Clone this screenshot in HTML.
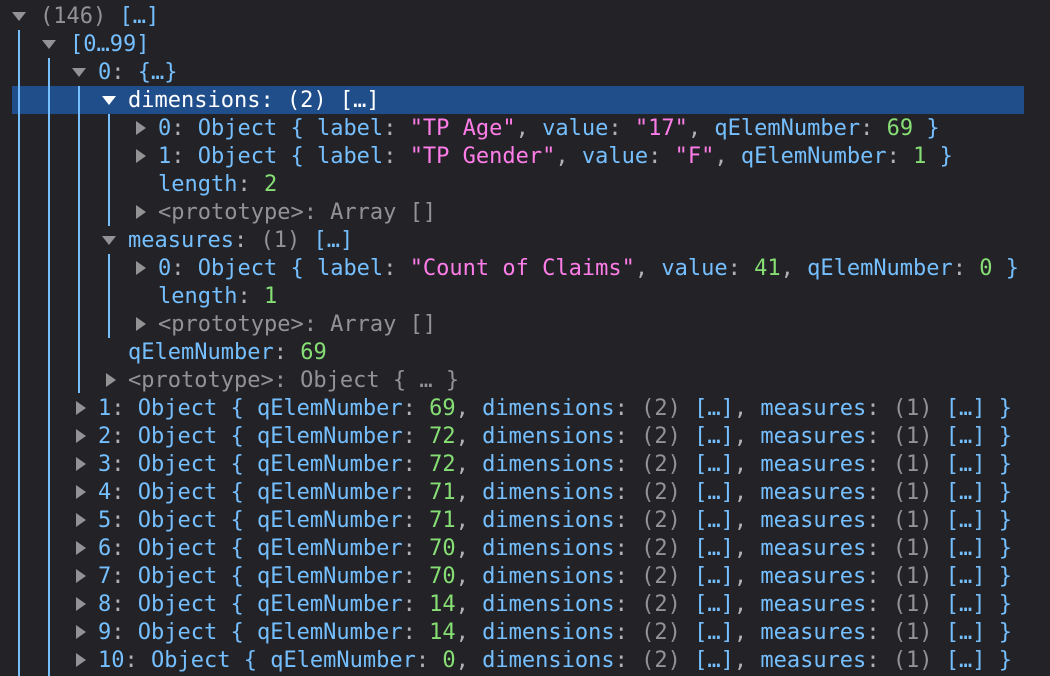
<!DOCTYPE html>
<html><head><style>
html,body{margin:0;padding:0;background:#232327;width:1050px;height:676px;overflow:hidden;}
body{position:relative;font-family:"DejaVu Sans Mono","Liberation Mono",monospace;font-size:22px;}
.r{position:absolute;height:28px;line-height:30px;white-space:pre;color:#75bfff;}
.g{color:#939395}.p{color:#ff7de9}.n{color:#86de74}.c{color:#b1b1b3}
.sel{position:absolute;left:12px;width:1012px;top:86px;height:28px;background:#204e8a;}
.v{position:absolute;width:2px;background:#75bfff;}
.td{position:absolute;width:0;height:0;border-left:7px solid transparent;border-right:7px solid transparent;border-top:9px solid #939395;}
.tr{position:absolute;width:0;height:0;border-top:7px solid transparent;border-bottom:7px solid transparent;border-left:10px solid #939395;}
</style></head><body>
<div class="sel"></div>
<div class="v" style="left:18px;top:30px;height:646px"></div>
<div class="v" style="left:48px;top:58px;height:618px"></div>
<div class="v" style="left:78px;top:86px;height:307px"></div>
<div class="v" style="left:108px;top:114px;height:112px"></div>
<div class="v" style="left:108px;top:254px;height:84px"></div>

<div class="td" style="left:12px;top:12px"></div>
<div class="r" style="left:40px;top:2px"><span class="g">(146)</span> […]</div>
<div class="td" style="left:42px;top:40px"></div>
<div class="r" style="left:70px;top:30px">[0…99]</div>
<div class="td" style="left:72px;top:68px"></div>
<div class="r" style="left:98px;top:58px">0<span class="c">:</span> {…}</div>
<div class="td" style="left:102px;top:96px;border-top-color:#fff"></div>
<div class="r" style="left:128px;top:86px;color:#fff">dimensions: (2) […]</div>

<div class="tr" style="left:136px;top:121px"></div>
<div class="r" style="left:158px;top:114px">0<span class="c">:</span> Object { label<span class="c">:</span> <span class="p">"TP Age"</span><span class="c">,</span> value<span class="c">:</span> <span class="p">"17"</span><span class="c">,</span> qElemNumber<span class="c">:</span> <span class="n">69</span> }</div>
<div class="tr" style="left:136px;top:149px"></div>
<div class="r" style="left:158px;top:142px">1<span class="c">:</span> Object { label<span class="c">:</span> <span class="p">"TP Gender"</span><span class="c">,</span> value<span class="c">:</span> <span class="p">"F"</span><span class="c">,</span> qElemNumber<span class="c">:</span> <span class="n">1</span> }</div>
<div class="r" style="left:158px;top:170px">length<span class="c">:</span> <span class="n">2</span></div>
<div class="tr" style="left:136px;top:205px"></div>
<div class="r g" style="left:158px;top:198px">&lt;prototype&gt;: Array []</div>

<div class="td" style="left:102px;top:236px"></div>
<div class="r" style="left:128px;top:226px">measures<span class="c">:</span> <span class="g">(1)</span> […]</div>
<div class="tr" style="left:136px;top:261px"></div>
<div class="r" style="left:158px;top:254px">0<span class="c">:</span> Object { label<span class="c">:</span> <span class="p">"Count of Claims"</span><span class="c">,</span> value<span class="c">:</span> <span class="n">41</span><span class="c">,</span> qElemNumber<span class="c">:</span> <span class="n">0</span> }</div>
<div class="r" style="left:158px;top:282px">length<span class="c">:</span> <span class="n">1</span></div>
<div class="tr" style="left:136px;top:317px"></div>
<div class="r g" style="left:158px;top:310px">&lt;prototype&gt;: Array []</div>
<div class="r" style="left:128px;top:338px">qElemNumber<span class="c">:</span> <span class="n">69</span></div>
<div class="tr" style="left:106px;top:373px"></div>
<div class="r g" style="left:128px;top:366px">&lt;prototype&gt;: Object { … }</div>

<div class="tr" style="left:76px;top:401px"></div>
<div class="r" style="left:98px;top:394px">1<span class="c">:</span> Object { qElemNumber<span class="c">:</span> <span class="n">69</span><span class="c">,</span> dimensions<span class="c">:</span> <span class="g">(2)</span> […]<span class="c">,</span> measures<span class="c">:</span> <span class="g">(1)</span> […] }</div>
<div class="tr" style="left:76px;top:429px"></div>
<div class="r" style="left:98px;top:422px">2<span class="c">:</span> Object { qElemNumber<span class="c">:</span> <span class="n">72</span><span class="c">,</span> dimensions<span class="c">:</span> <span class="g">(2)</span> […]<span class="c">,</span> measures<span class="c">:</span> <span class="g">(1)</span> […] }</div>
<div class="tr" style="left:76px;top:457px"></div>
<div class="r" style="left:98px;top:450px">3<span class="c">:</span> Object { qElemNumber<span class="c">:</span> <span class="n">72</span><span class="c">,</span> dimensions<span class="c">:</span> <span class="g">(2)</span> […]<span class="c">,</span> measures<span class="c">:</span> <span class="g">(1)</span> […] }</div>
<div class="tr" style="left:76px;top:485px"></div>
<div class="r" style="left:98px;top:478px">4<span class="c">:</span> Object { qElemNumber<span class="c">:</span> <span class="n">71</span><span class="c">,</span> dimensions<span class="c">:</span> <span class="g">(2)</span> […]<span class="c">,</span> measures<span class="c">:</span> <span class="g">(1)</span> […] }</div>
<div class="tr" style="left:76px;top:513px"></div>
<div class="r" style="left:98px;top:506px">5<span class="c">:</span> Object { qElemNumber<span class="c">:</span> <span class="n">71</span><span class="c">,</span> dimensions<span class="c">:</span> <span class="g">(2)</span> […]<span class="c">,</span> measures<span class="c">:</span> <span class="g">(1)</span> […] }</div>
<div class="tr" style="left:76px;top:541px"></div>
<div class="r" style="left:98px;top:534px">6<span class="c">:</span> Object { qElemNumber<span class="c">:</span> <span class="n">70</span><span class="c">,</span> dimensions<span class="c">:</span> <span class="g">(2)</span> […]<span class="c">,</span> measures<span class="c">:</span> <span class="g">(1)</span> […] }</div>
<div class="tr" style="left:76px;top:569px"></div>
<div class="r" style="left:98px;top:562px">7<span class="c">:</span> Object { qElemNumber<span class="c">:</span> <span class="n">70</span><span class="c">,</span> dimensions<span class="c">:</span> <span class="g">(2)</span> […]<span class="c">,</span> measures<span class="c">:</span> <span class="g">(1)</span> […] }</div>
<div class="tr" style="left:76px;top:597px"></div>
<div class="r" style="left:98px;top:590px">8<span class="c">:</span> Object { qElemNumber<span class="c">:</span> <span class="n">14</span><span class="c">,</span> dimensions<span class="c">:</span> <span class="g">(2)</span> […]<span class="c">,</span> measures<span class="c">:</span> <span class="g">(1)</span> […] }</div>
<div class="tr" style="left:76px;top:625px"></div>
<div class="r" style="left:98px;top:618px">9<span class="c">:</span> Object { qElemNumber<span class="c">:</span> <span class="n">14</span><span class="c">,</span> dimensions<span class="c">:</span> <span class="g">(2)</span> […]<span class="c">,</span> measures<span class="c">:</span> <span class="g">(1)</span> […] }</div>
<div class="tr" style="left:76px;top:653px"></div>
<div class="r" style="left:98px;top:646px">10<span class="c">:</span> Object { qElemNumber<span class="c">:</span> <span class="n">0</span><span class="c">,</span> dimensions<span class="c">:</span> <span class="g">(2)</span> […]<span class="c">,</span> measures<span class="c">:</span> <span class="g">(1)</span> […] }</div>
</body></html>
